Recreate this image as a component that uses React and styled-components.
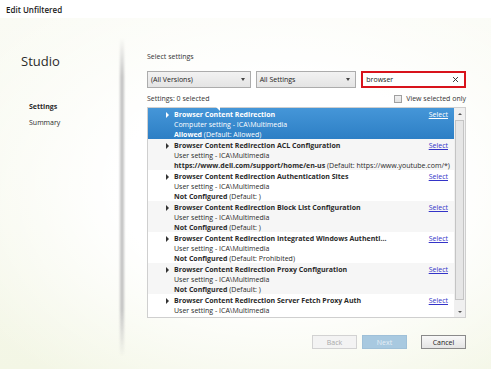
import styled, { createGlobalStyle } from "styled-components";

const GlobalStyle = createGlobalStyle`
  html, body {
    margin: 0;
    padding: 0;
  }
  body {
    font-family: "Open Sans", "Liberation Sans", sans-serif;
    color: #222;
  }
`;

const settings = [
  {
    name: "Browser Content Redirection",
    scope: "Computer setting - ICA\\Multimedia",
    value: "Allowed",
    def: "(Default: Allowed)",
  },
  {
    name: "Browser Content Redirection ACL Configuration",
    scope: "User setting - ICA\\Multimedia",
    value: "https://www.dell.com/support/home/en-us",
    def: "(Default: https://www.youtube.com/*)",
  },
  {
    name: "Browser Content Redirection Authentication Sites",
    scope: "User setting - ICA\\Multimedia",
    value: "Not Configured",
    def: "(Default: )",
  },
  {
    name: "Browser Content Redirection Block List Configuration",
    scope: "User setting - ICA\\Multimedia",
    value: "Not Configured",
    def: "(Default: )",
  },
  {
    name: "Browser Content Redirection Integrated Windows Authenti...",
    scope: "User setting - ICA\\Multimedia",
    value: "Not Configured",
    def: "(Default: Prohibited)",
  },
  {
    name: "Browser Content Redirection Proxy Configuration",
    scope: "User setting - ICA\\Multimedia",
    value: "Not Configured",
    def: "(Default: )",
  },
  {
    name: "Browser Content Redirection Server Fetch Proxy Auth",
    scope: "User setting - ICA\\Multimedia",
  },
];

export default function App() {
  return (
    <Window>
      <GlobalStyle />
      <TitleBar>Edit Unfiltered</TitleBar>
      <Body>
        <Nav>
          <Brand>Studio</Brand>
          <NavList>
            <NavItem $active>Settings</NavItem>
            <NavItem>Summary</NavItem>
          </NavList>
        </Nav>
        <Main>
          <Heading>Select settings</Heading>
          <Toolbar>
            <Dropdown $w={104}>
              (All Versions)
              <Caret />
            </Dropdown>
            <Dropdown $w={101}>
              All Settings
              <Caret />
            </Dropdown>
            <SearchBox>
              browser
              <ClearIcon viewBox="0 0 10 10">
                <path d="M1.5 1.5 L8.5 8.5 M8.5 1.5 L1.5 8.5" />
              </ClearIcon>
            </SearchBox>
          </Toolbar>
          <InfoRow>
            <Count>Settings: 0 selected</Count>
            <CheckLabel>
              <Box />
              View selected only
            </CheckLabel>
          </InfoRow>
          <ListBox>
            <Rows>
              {settings.map((s, i) => (
                <Row key={i} $selected={i === 0} $alt={i % 2 === 1}>
                  <Expander $selected={i === 0} />
                  <RowText>
                    <RowHead>
                      <RowName>{s.name}</RowName>
                      <SelectLink $selected={i === 0}>Select</SelectLink>
                    </RowHead>
                    <div>{s.scope}</div>
                    {s.value && (
                      <RowValue>
                        <b>{s.value}</b> {s.def}
                      </RowValue>
                    )}
                  </RowText>
                </Row>
              ))}
            </Rows>
            <ScrollBar>
              <ScrollArrow $up />
              <ScrollTrack>
                <Thumb />
              </ScrollTrack>
              <ScrollArrow />
            </ScrollBar>
          </ListBox>
          <Footer>
            <Button $variant="disabled">Back</Button>
            <Button $variant="primary">Next</Button>
            <Button $variant="default" $gap>Cancel</Button>
          </Footer>
        </Main>
      </Body>
    </Window>
  );
}

const Window = styled.div`
  width: 491px;
  height: 369px;
  display: flex;
  flex-direction: column;
  overflow: hidden;
  background: #fff;
`;

const TitleBar = styled.div`
  height: 18px;
  padding-left: 6px;
  display: flex;
  align-items: center;
  font-size: 8px;
  font-weight: 600;
  color: #1a1a1a;
  background: #fff;
`;

const Body = styled.div`
  flex: 1;
  display: flex;
  background:
    radial-gradient(ellipse 75% 70% at 58% 48%, #ffffff 45%, rgba(255, 255, 255, 0) 100%),
    linear-gradient(to bottom, #fafbf4 0%, #f3f6e5 100%);
`;

const Nav = styled.div`
  width: 124px;
  flex-shrink: 0;
  padding-top: 35px;
  position: relative;

  &::after {
    content: "";
    position: absolute;
    right: 0;
    top: 20px;
    bottom: 12px;
    width: 4px;
    background: linear-gradient(
      to bottom,
      rgba(190, 190, 190, 0) 0%,
      rgba(190, 190, 190, 0.9) 12%,
      rgba(190, 190, 190, 0.9) 85%,
      rgba(190, 190, 190, 0) 100%
    );
    filter: blur(1px);
  }
`;

const Brand = styled.div`
  padding-left: 21px;
  font-size: 13px;
  line-height: 16px;
  color: #2a2a2a;
`;

const NavList = styled.div`
  margin-top: 33px;
  padding-left: 29px;
  display: flex;
  flex-direction: column;
  gap: 6px;
`;

const NavItem = styled.div`
  position: relative;
  font-size: 7px;
  line-height: 10px;
  font-weight: ${({ $active }) => ($active ? 700 : 400)};
  color: #2a2a2a;

  &::after {
    content: "";
    display: ${({ $active }) => ($active ? "block" : "none")};
    position: absolute;
    right: -96px;
    top: 1px;
    width: 0;
    height: 0;
    border-top: 4px solid transparent;
    border-bottom: 4px solid transparent;
    border-right: 4px solid #fff;
    z-index: 2;
  }
`;

const Main = styled.div`
  flex: 1;
  min-width: 0;
  padding: 34px 25px 0 23px;
  display: flex;
  flex-direction: column;
`;

const Heading = styled.div`
  font-size: 7px;
  line-height: 10px;
  color: #333;
`;

const Toolbar = styled.div`
  margin-top: 9px;
  display: flex;
  gap: 5px;
  height: 17px;
`;

const Dropdown = styled.div`
  width: ${({ $w }) => $w}px;
  box-sizing: border-box;
  border: 1px solid #acacac;
  background: linear-gradient(to bottom, #f2f2f2, #e4e4e4);
  display: flex;
  align-items: center;
  justify-content: space-between;
  padding: 0 5px 0 3px;
  font-size: 7px;
  color: #222;
`;

const Caret = styled.span`
  width: 0;
  height: 0;
  border-left: 2.5px solid transparent;
  border-right: 2.5px solid transparent;
  border-top: 3px solid #444;
`;

const SearchBox = styled.div`
  width: 105px;
  box-sizing: border-box;
  border: 2.5px solid #d8131c;
  background: #fff;
  display: flex;
  align-items: center;
  justify-content: space-between;
  padding: 0 5px 0 3px;
  font-size: 7px;
  color: #222;
`;

const ClearIcon = styled.svg`
  width: 7px;
  height: 7px;
  stroke: #333;
  stroke-width: 1.4;
  fill: none;
`;

const InfoRow = styled.div`
  margin-top: 5px;
  display: flex;
  justify-content: space-between;
  align-items: center;
  height: 11px;
`;

const Count = styled.div`
  font-size: 7px;
  color: #333;
`;

const CheckLabel = styled.div`
  display: flex;
  align-items: center;
  gap: 4px;
  font-size: 7px;
  color: #333;
`;

const Box = styled.span`
  width: 8px;
  height: 8px;
  box-sizing: border-box;
  border: 1px solid #a0a0a0;
  background: linear-gradient(to bottom, #f0f0f0, #e2e2e2);
`;

const ListBox = styled.div`
  margin-top: 3px;
  height: 211px;
  box-sizing: border-box;
  border: 1px solid #cfcfcf;
  background: #fff;
  display: flex;
  overflow: hidden;
`;

const Rows = styled.div`
  flex: 1;
  min-width: 0;
  display: flex;
  flex-direction: column;
`;

const Row = styled.div`
  height: 31px;
  flex-shrink: 0;
  display: flex;
  align-items: flex-start;
  padding: 2px 6px 0 18px;
  box-sizing: border-box;
  background: ${({ $selected, $alt }) =>
    $selected
      ? "linear-gradient(to bottom, #4596d8, #2d7fc5)"
      : $alt
      ? "#f6f6f6"
      : "#fff"};
  color: ${({ $selected }) => ($selected ? "#fff" : "#2a2a2a")};
`;

const Expander = styled.span`
  margin-top: 2px;
  width: 0;
  height: 0;
  border-top: 3px solid transparent;
  border-bottom: 3px solid transparent;
  border-left: 3.5px solid ${({ $selected }) => ($selected ? "#fff" : "#333")};
  margin-right: 5px;
  flex-shrink: 0;
`;

const RowText = styled.div`
  flex: 1;
  min-width: 0;
  font-size: 7px;
  line-height: 10px;
  white-space: nowrap;
`;

const RowHead = styled.div`
  display: flex;
  justify-content: space-between;
`;

const RowName = styled.span`
  font-weight: 700;
`;

const RowValue = styled.div`
  b {
    font-weight: 700;
  }
`;

const SelectLink = styled.span`
  text-decoration: underline;
  color: ${({ $selected }) => ($selected ? "#fff" : "#3434c8")};
`;

const ScrollBar = styled.div`
  width: 11px;
  flex-shrink: 0;
  background: #f0f0f0;
  display: flex;
  flex-direction: column;
  align-items: center;
`;

const ScrollArrow = styled.div`
  height: 11px;
  display: flex;
  align-items: center;
  justify-content: center;

  &::before {
    content: "";
    width: 0;
    height: 0;
    border-left: 2px solid transparent;
    border-right: 2px solid transparent;
    ${({ $up }) => ($up ? "border-bottom: 2.5px solid #555;" : "border-top: 2.5px solid #555;")}
  }
`;

const ScrollTrack = styled.div`
  flex: 1;
  width: 100%;
  padding: 1px 1px 6px;
  box-sizing: border-box;
`;

const Thumb = styled.div`
  height: 100%;
  box-sizing: border-box;
  border: 1px solid #c4c4c4;
  background: #e6e6e6;
`;

const Footer = styled.div`
  margin-top: 17px;
  display: flex;
  justify-content: flex-end;
  gap: 5px;
`;

const Button = styled.div`
  width: 45px;
  height: 14px;
  box-sizing: border-box;
  display: flex;
  align-items: center;
  justify-content: center;
  font-size: 7px;
  margin-left: ${({ $gap }) => ($gap ? "9px" : "0")};
  border: 1px solid
    ${({ $variant }) =>
      $variant === "primary" ? "#9fc0d8" : $variant === "disabled" ? "#d2d2d2" : "#8a8a8a"};
  background: ${({ $variant }) =>
    $variant === "primary"
      ? "#a8c9e0"
      : $variant === "disabled"
      ? "#f3f3f3"
      : "linear-gradient(to bottom, #f8f8f8, #e4e4e4)"};
  color: ${({ $variant }) =>
    $variant === "primary" ? "#e6eff6" : $variant === "disabled" ? "#a8a8a8" : "#222"};
`;
